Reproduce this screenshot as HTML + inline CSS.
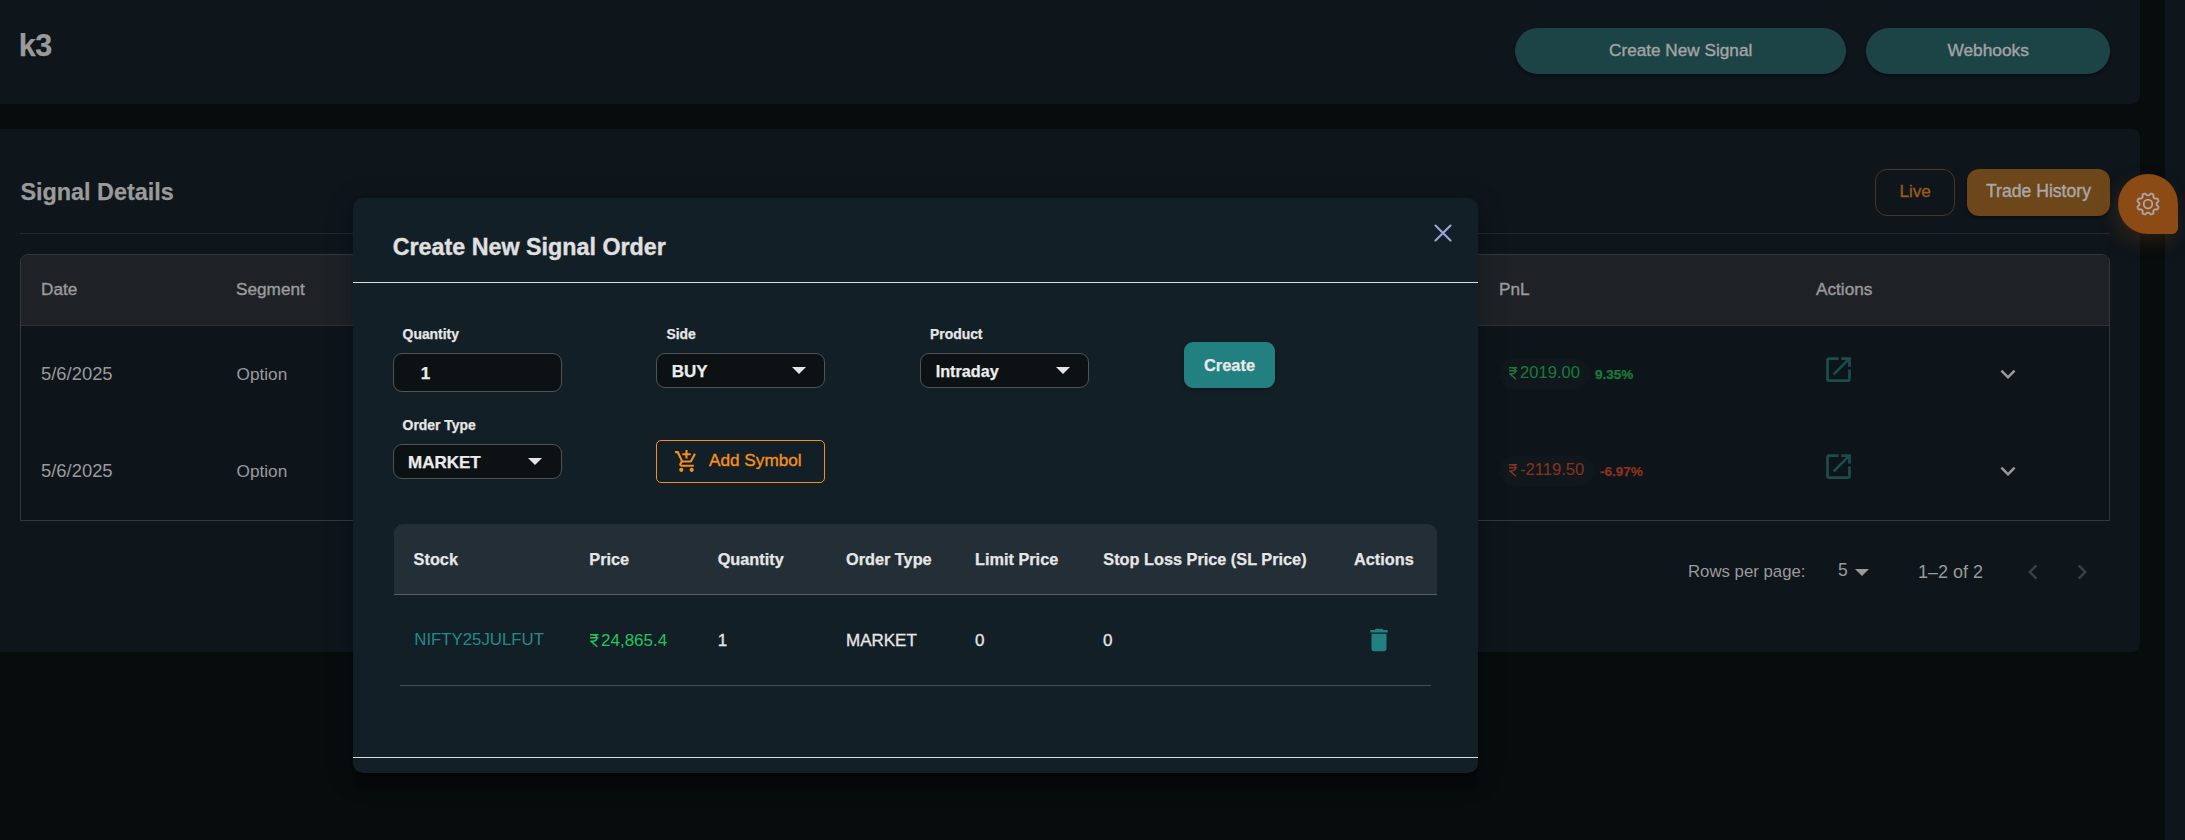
<!DOCTYPE html>
<html><head><meta charset="utf-8"><title>Signal</title>
<style>
html,body{margin:0;padding:0;}
body{width:2185px;height:840px;overflow:hidden;position:relative;background:#070c0d;font-family:"Liberation Sans",sans-serif;}
.t{position:absolute;white-space:nowrap;line-height:1;font-family:"Liberation Sans",sans-serif;}
.r{position:absolute;}
</style></head><body>
<div class="r" style="left:0px;top:0px;width:2140px;height:104px;background:#0e151b;border-radius:0 0 8px 0"></div>
<div class="r" style="left:0px;top:129px;width:2140px;height:523px;background:#0e151b;border-radius:0 8px 8px 0"></div>
<div class="r" style="left:2165px;top:0px;width:20px;height:840px;background:#0e151b"></div>
<div class="t" style="left:18.8px;top:29.78px;font-size:30.5px;font-weight:700;color:#9a9a9a;letter-spacing:-0.5px;-webkit-text-stroke:0.25px #9a9a9a;">k3</div>
<div class="r" style="left:1515px;top:28px;width:331px;height:46px;background:#1c4447;border-radius:23px;box-shadow:0 2px 3px rgba(0,0,0,0.35)"></div>
<div class="t" style="left:1609px;top:42.14px;font-size:17.2px;font-weight:400;color:#a3a3a3;-webkit-text-stroke:0.4px #a3a3a3">Create New Signal</div>
<div class="r" style="left:1866px;top:28px;width:244px;height:46px;background:#1c4447;border-radius:23px;box-shadow:0 2px 3px rgba(0,0,0,0.35)"></div>
<div class="t" style="left:1947.5px;top:42.06px;font-size:17.3px;font-weight:400;color:#a3a3a3;-webkit-text-stroke:0.4px #a3a3a3">Webhooks</div>
<div class="t" style="left:20.4px;top:180.89px;font-size:23.4px;font-weight:700;color:#9a9a9a;-webkit-text-stroke:0.25px #9a9a9a;">Signal Details</div>
<div class="r" style="left:20px;top:233px;width:2090px;height:1px;background:#23282b"></div>
<div class="r" style="left:1875px;top:169px;width:80px;height:47px;border:1px solid #4d361d;border-radius:12px;box-sizing:border-box"></div>
<div class="t" style="left:1899.4px;top:183.44px;font-size:17.2px;font-weight:400;color:#9a5a18;-webkit-text-stroke:0.4px #9a5a18">Live</div>
<div class="r" style="left:1967px;top:169px;width:143px;height:47px;background:#6d4619;border-radius:12px;box-shadow:0 2px 3px rgba(0,0,0,0.35)"></div>
<div class="t" style="left:1986px;top:183.10px;font-size:17.6px;font-weight:400;color:#a8a8a8;-webkit-text-stroke:0.4px #a8a8a8">Trade History</div>
<div class="r" style="left:2118px;top:174px;width:60px;height:60px;background:#8c4a14;border-radius:30px 30px 6px 30px;box-shadow:-4px 8px 18px rgba(140,74,20,0.25)"></div>
<svg class="r" style="left:2134px;top:190px;" width="28" height="28" viewBox="0 0 28 28"><path d="M14.00 5.40 L14.23 5.40 L14.45 5.40 L14.68 5.39 L14.91 5.35 L15.15 5.26 L15.42 5.04 L15.74 4.64 L16.10 4.14 L16.46 3.76 L16.79 3.58 L17.10 3.54 L17.39 3.57 L17.67 3.64 L17.94 3.73 L18.21 3.84 L18.47 3.95 L18.73 4.08 L18.98 4.23 L19.20 4.41 L19.39 4.66 L19.50 5.02 L19.49 5.55 L19.39 6.15 L19.33 6.66 L19.37 7.01 L19.47 7.24 L19.61 7.43 L19.76 7.60 L19.92 7.76 L20.08 7.92 L20.24 8.08 L20.40 8.24 L20.57 8.39 L20.76 8.53 L20.99 8.63 L21.34 8.67 L21.85 8.61 L22.45 8.51 L22.98 8.50 L23.34 8.61 L23.59 8.80 L23.77 9.02 L23.92 9.27 L24.05 9.53 L24.16 9.79 L24.27 10.06 L24.36 10.33 L24.43 10.61 L24.46 10.90 L24.42 11.21 L24.24 11.54 L23.86 11.90 L23.36 12.26 L22.96 12.58 L22.74 12.85 L22.65 13.09 L22.61 13.32 L22.60 13.55 L22.60 13.77 L22.60 14.00 L22.60 14.23 L22.60 14.45 L22.61 14.68 L22.65 14.91 L22.74 15.15 L22.96 15.42 L23.36 15.74 L23.86 16.10 L24.24 16.46 L24.42 16.79 L24.46 17.10 L24.43 17.39 L24.36 17.67 L24.27 17.94 L24.16 18.21 L24.05 18.47 L23.92 18.73 L23.77 18.98 L23.59 19.20 L23.34 19.39 L22.98 19.50 L22.45 19.49 L21.85 19.39 L21.34 19.33 L20.99 19.37 L20.76 19.47 L20.57 19.61 L20.40 19.76 L20.24 19.92 L20.08 20.08 L19.92 20.24 L19.76 20.40 L19.61 20.57 L19.47 20.76 L19.37 20.99 L19.33 21.34 L19.39 21.85 L19.49 22.45 L19.50 22.98 L19.39 23.34 L19.20 23.59 L18.98 23.77 L18.73 23.92 L18.47 24.05 L18.21 24.16 L17.94 24.27 L17.67 24.36 L17.39 24.43 L17.10 24.46 L16.79 24.42 L16.46 24.24 L16.10 23.86 L15.74 23.36 L15.42 22.96 L15.15 22.74 L14.91 22.65 L14.68 22.61 L14.45 22.60 L14.23 22.60 L14.00 22.60 L13.77 22.60 L13.55 22.60 L13.32 22.61 L13.09 22.65 L12.85 22.74 L12.58 22.96 L12.26 23.36 L11.90 23.86 L11.54 24.24 L11.21 24.42 L10.90 24.46 L10.61 24.43 L10.33 24.36 L10.06 24.27 L9.79 24.16 L9.53 24.05 L9.27 23.92 L9.02 23.77 L8.80 23.59 L8.61 23.34 L8.50 22.98 L8.51 22.45 L8.61 21.85 L8.67 21.34 L8.63 20.99 L8.53 20.76 L8.39 20.57 L8.24 20.40 L8.08 20.24 L7.92 20.08 L7.76 19.92 L7.60 19.76 L7.43 19.61 L7.24 19.47 L7.01 19.37 L6.66 19.33 L6.15 19.39 L5.55 19.49 L5.02 19.50 L4.66 19.39 L4.41 19.20 L4.23 18.98 L4.08 18.73 L3.95 18.47 L3.84 18.21 L3.73 17.94 L3.64 17.67 L3.57 17.39 L3.54 17.10 L3.58 16.79 L3.76 16.46 L4.14 16.10 L4.64 15.74 L5.04 15.42 L5.26 15.15 L5.35 14.91 L5.39 14.68 L5.40 14.45 L5.40 14.23 L5.40 14.00 L5.40 13.77 L5.40 13.55 L5.39 13.32 L5.35 13.09 L5.26 12.85 L5.04 12.58 L4.64 12.26 L4.14 11.90 L3.76 11.54 L3.58 11.21 L3.54 10.90 L3.57 10.61 L3.64 10.33 L3.73 10.06 L3.84 9.79 L3.95 9.53 L4.08 9.27 L4.23 9.02 L4.41 8.80 L4.66 8.61 L5.02 8.50 L5.55 8.51 L6.15 8.61 L6.66 8.67 L7.01 8.63 L7.24 8.53 L7.43 8.39 L7.60 8.24 L7.76 8.08 L7.92 7.92 L8.08 7.76 L8.24 7.60 L8.39 7.43 L8.53 7.24 L8.63 7.01 L8.67 6.66 L8.61 6.15 L8.51 5.55 L8.50 5.02 L8.61 4.66 L8.80 4.41 L9.02 4.23 L9.27 4.08 L9.53 3.95 L9.79 3.84 L10.06 3.73 L10.33 3.64 L10.61 3.57 L10.90 3.54 L11.21 3.58 L11.54 3.76 L11.90 4.14 L12.26 4.64 L12.58 5.04 L12.85 5.26 L13.09 5.35 L13.32 5.39 L13.55 5.40 L13.77 5.40Z" fill="none" stroke="#a9a9a9" stroke-width="1.8" stroke-linejoin="round"/><circle cx="14" cy="14" r="4.3" fill="none" stroke="#a9a9a9" stroke-width="1.8"/></svg>
<div class="r" style="left:20px;top:254px;width:2090px;height:267px;border:1px solid #35383a;border-radius:8px 8px 0 0;box-sizing:border-box;background:#0e151a"></div>
<div class="r" style="left:21px;top:255px;width:2088px;height:70px;background:#1e2226;border-radius:7px 7px 0 0"></div>
<div class="r" style="left:21px;top:325px;width:2088px;height:1px;background:#2e3235"></div>
<div class="t" style="left:41px;top:281.44px;font-size:17.2px;font-weight:400;color:#9a9a9a;-webkit-text-stroke:0.4px #9a9a9a">Date</div>
<div class="t" style="left:236px;top:281.44px;font-size:17.2px;font-weight:400;color:#9a9a9a;-webkit-text-stroke:0.4px #9a9a9a">Segment</div>
<div class="t" style="left:1499px;top:281.44px;font-size:17.2px;font-weight:400;color:#9a9a9a;-webkit-text-stroke:0.4px #9a9a9a">PnL</div>
<div class="t" style="left:1816px;top:281.44px;font-size:17.2px;font-weight:400;color:#9a9a9a;-webkit-text-stroke:0.4px #9a9a9a">Actions</div>
<div class="t" style="left:41px;top:364.72px;font-size:18.4px;font-weight:400;color:#9a9a9a;">5/6/2025</div>
<div class="t" style="left:236.6px;top:365.74px;font-size:17.2px;font-weight:400;color:#9a9a9a;">Option</div>
<div class="t" style="left:41px;top:461.72px;font-size:18.4px;font-weight:400;color:#9a9a9a;">5/6/2025</div>
<div class="t" style="left:236.6px;top:462.74px;font-size:17.2px;font-weight:400;color:#9a9a9a;">Option</div>
<div class="r" style="left:1499px;top:359px;width:91px;height:30px;background:#10181d;border-radius:15px"></div>
<svg class="r" style="left:1509px;top:366.7px;overflow:visible" width="8.12" height="12.30" viewBox="0 0 8.12 12.30"><path d="M0 0.71 H8.12 M0 3.69 H8.12 M2.27 0.71 C7.96 0.71 7.96 6.89 2.27 6.89 H0.16 M0.97 6.89 L6.98 12.30" fill="none" stroke="#1b7a3a" stroke-width="1.41"/></svg>
<div class="t" style="left:1520px;top:365.25px;font-size:16.6px;font-weight:400;color:#1b7a3a;">2019.00</div>
<div class="t" style="left:1595px;top:367.87px;font-size:13.5px;font-weight:700;color:#1b7a3a;-webkit-text-stroke:0.25px #1b7a3a;">9.35%</div>
<div class="r" style="left:1499px;top:456px;width:96px;height:30px;background:#10181d;border-radius:15px"></div>
<svg class="r" style="left:1509px;top:463.7px;overflow:visible" width="8.12" height="12.30" viewBox="0 0 8.12 12.30"><path d="M0 0.71 H8.12 M0 3.69 H8.12 M2.27 0.71 C7.96 0.71 7.96 6.89 2.27 6.89 H0.16 M0.97 6.89 L6.98 12.30" fill="none" stroke="#8a321c" stroke-width="1.41"/></svg>
<div class="t" style="left:1520px;top:462.25px;font-size:16.6px;font-weight:400;color:#8a321c;">-2119.50</div>
<div class="t" style="left:1600px;top:464.87px;font-size:13.5px;font-weight:700;color:#8a321c;-webkit-text-stroke:0.25px #8a321c;">-6.97%</div>
<svg class="r" style="left:1822px;top:352.5px;" width="33" height="33" viewBox="0 0 24 24"><path fill="#1c4d4d" d="M19 19H5V5h7V3H5c-1.11 0-2 .9-2 2v14c0 1.1.89 2 2 2h14c1.1 0 2-.9 2-2v-7h-2v7zM14 3v2h3.59l-9.83 9.83 1.41 1.41L19 6.41V10h2V3h-7z"/></svg>
<svg class="r" style="left:1993px;top:359px;" width="30" height="30" viewBox="0 0 24 24"><path fill="#9a9a9a" d="M16.59 8.59 12 13.17 7.41 8.59 6 10l6 6 6-6z"/></svg>
<svg class="r" style="left:1822px;top:449.5px;" width="33" height="33" viewBox="0 0 24 24"><path fill="#1c4d4d" d="M19 19H5V5h7V3H5c-1.11 0-2 .9-2 2v14c0 1.1.89 2 2 2h14c1.1 0 2-.9 2-2v-7h-2v7zM14 3v2h3.59l-9.83 9.83 1.41 1.41L19 6.41V10h2V3h-7z"/></svg>
<svg class="r" style="left:1993px;top:456px;" width="30" height="30" viewBox="0 0 24 24"><path fill="#9a9a9a" d="M16.59 8.59 12 13.17 7.41 8.59 6 10l6 6 6-6z"/></svg>
<div class="t" style="left:1688px;top:563.78px;font-size:16.8px;font-weight:400;color:#9a9a9a;">Rows per page:</div>
<div class="t" style="left:1838px;top:562.19px;font-size:17.5px;font-weight:400;color:#9a9a9a;">5</div>
<svg class="r" style="left:1855px;top:569px;" width="14" height="7" viewBox="0 0 14 7"><path fill="#9a9a9a" d="M0 0H14L7 7z"/></svg>
<div class="t" style="left:1918px;top:562.76px;font-size:18px;font-weight:400;color:#9a9a9a;">1–2 of 2</div>
<svg class="r" style="left:2018px;top:556.5px;" width="30" height="30" viewBox="0 0 24 24"><path fill="#3a3f42" d="M15.41 7.41 14 6l-6 6 6 6 1.41-1.41L10.83 12z"/></svg>
<svg class="r" style="left:2067.3px;top:556.5px;" width="30" height="30" viewBox="0 0 24 24"><path fill="#3a3f42" d="M10 6 8.59 7.41 13.17 12l-4.58 4.59L10 18l6-6z"/></svg>
<div class="r" style="left:353px;top:198px;width:1125px;height:575px;background:#131f27;border-radius:10px;box-shadow:0 19px 5px -3px rgba(0,0,0,0.32),0 6px 26px 2px rgba(0,0,0,0.22)"></div>
<div class="t" style="left:392.7px;top:236.28px;font-size:23.3px;font-weight:700;color:#e0e0e0;-webkit-text-stroke:0.35px #e0e0e0">Create New Signal Order</div>
<svg class="r" style="left:1434px;top:224px;" width="18" height="18" viewBox="0 0 18 18"><path d="M1.5 1.5L16.5 16.5M16.5 1.5L1.5 16.5" stroke="#9ea7d8" stroke-width="2.1" stroke-linecap="round"/></svg>
<div class="r" style="left:353px;top:281.5px;width:1125px;height:1.5px;background:#dcdcdc"></div>
<div class="t" style="left:402.6px;top:328.23px;font-size:13.9px;font-weight:700;color:#e6e6e6;-webkit-text-stroke:0.25px #e6e6e6;">Quantity</div>
<div class="t" style="left:666.4px;top:328.23px;font-size:13.9px;font-weight:700;color:#e6e6e6;-webkit-text-stroke:0.25px #e6e6e6;">Side</div>
<div class="t" style="left:930px;top:328.23px;font-size:13.9px;font-weight:700;color:#e6e6e6;-webkit-text-stroke:0.25px #e6e6e6;">Product</div>
<div class="t" style="left:402.6px;top:419.23px;font-size:13.9px;font-weight:700;color:#e6e6e6;-webkit-text-stroke:0.25px #e6e6e6;">Order Type</div>
<div class="r" style="left:393px;top:353px;width:169px;height:39px;background:#0c1213;border:1px solid #505356;border-radius:9px;box-sizing:border-box"></div>
<div class="t" style="left:420.7px;top:364.61px;font-size:17px;font-weight:700;color:#ececec;-webkit-text-stroke:0.25px #ececec;">1</div>
<div class="r" style="left:656px;top:353px;width:169px;height:35px;background:#0c1213;border:1px solid #505356;border-radius:9px;box-sizing:border-box"></div>
<div class="t" style="left:671.7px;top:362.61px;font-size:17px;font-weight:700;color:#ececec;-webkit-text-stroke:0.25px #ececec;">BUY</div>
<svg class="r" style="left:792px;top:367px;" width="14" height="7" viewBox="0 0 14 7"><path fill="#e6e6e6" d="M0 0H14L7 7z"/></svg>
<div class="r" style="left:920px;top:353px;width:169px;height:35px;background:#0c1213;border:1px solid #505356;border-radius:9px;box-sizing:border-box"></div>
<div class="t" style="left:935.7px;top:363.29px;font-size:16.2px;font-weight:700;color:#ececec;-webkit-text-stroke:0.25px #ececec;">Intraday</div>
<svg class="r" style="left:1056px;top:367px;" width="14" height="7" viewBox="0 0 14 7"><path fill="#e6e6e6" d="M0 0H14L7 7z"/></svg>
<div class="r" style="left:1184px;top:342px;width:91px;height:46px;background:#238080;border-radius:9px;box-shadow:0 2px 4px rgba(0,0,0,0.3)"></div>
<div class="t" style="left:1204px;top:357.12px;font-size:16.4px;font-weight:700;color:#e8e8e8;-webkit-text-stroke:0.25px #e8e8e8;">Create</div>
<div class="r" style="left:393px;top:444px;width:169px;height:35px;background:#0c1213;border:1px solid #505356;border-radius:9px;box-sizing:border-box"></div>
<div class="t" style="left:408px;top:453.61px;font-size:17px;font-weight:700;color:#ececec;-webkit-text-stroke:0.25px #ececec;">MARKET</div>
<svg class="r" style="left:528px;top:458px;" width="14" height="7" viewBox="0 0 14 7"><path fill="#e6e6e6" d="M0 0H14L7 7z"/></svg>
<div class="r" style="left:656px;top:440px;width:169px;height:43px;border:1px solid #f5901e;border-radius:5px;box-sizing:border-box"></div>
<svg class="r" style="left:673.7px;top:449px;" width="25" height="25" viewBox="0 0 24 24"><path fill="#f5901e" d="M11 9h2V6h3V4h-3V1h-2v3H8v2h3v3zm-4 9c-1.1 0-1.99.9-1.99 2S5.9 22 7 22s2-.9 2-2-.9-2-2-2zm10 0c-1.1 0-1.99.9-1.99 2s.89 2 1.99 2 2-.9 2-2-.9-2-2-2zm-8.9-5h7.45c.75 0 1.41-.41 1.75-1.03L21 4.96 19.25 4l-3.7 7H8.53L4.27 2H1v2h2l3.6 7.59-1.35 2.44C4.52 15.37 5.48 17 7 17h12v-2H7l1.1-2z"/></svg>
<div class="t" style="left:709px;top:452.44px;font-size:17.2px;font-weight:400;color:#f5901e;-webkit-text-stroke:0.35px #f5901e">Add Symbol</div>
<div class="r" style="left:394px;top:524px;width:1043px;height:70px;background:#232e36;border-radius:9px 9px 0 0"></div>
<div class="r" style="left:394px;top:594px;width:1043px;height:1px;background:#5a5d5f"></div>
<div class="t" style="left:413.6px;top:551.40px;font-size:16.3px;font-weight:700;color:#e6e6e6;-webkit-text-stroke:0.25px #e6e6e6;">Stock</div>
<div class="t" style="left:589.3px;top:551.40px;font-size:16.3px;font-weight:700;color:#e6e6e6;-webkit-text-stroke:0.25px #e6e6e6;">Price</div>
<div class="t" style="left:717.7px;top:551.40px;font-size:16.3px;font-weight:700;color:#e6e6e6;-webkit-text-stroke:0.25px #e6e6e6;">Quantity</div>
<div class="t" style="left:846px;top:551.40px;font-size:16.3px;font-weight:700;color:#e6e6e6;-webkit-text-stroke:0.25px #e6e6e6;">Order Type</div>
<div class="t" style="left:975px;top:551.40px;font-size:16.3px;font-weight:700;color:#e6e6e6;-webkit-text-stroke:0.25px #e6e6e6;">Limit Price</div>
<div class="t" style="left:1103.3px;top:551.40px;font-size:16.3px;font-weight:700;color:#e6e6e6;-webkit-text-stroke:0.25px #e6e6e6;">Stop Loss Price (SL Price)</div>
<div class="t" style="left:1354px;top:551.40px;font-size:16.3px;font-weight:700;color:#e6e6e6;-webkit-text-stroke:0.25px #e6e6e6;">Actions</div>
<div class="t" style="left:414.3px;top:632.18px;font-size:16.8px;font-weight:400;color:#238a8a;">NIFTY25JULFUT</div>
<svg class="r" style="left:590px;top:633.6px;overflow:visible" width="8.45" height="12.80" viewBox="0 0 8.45 12.80"><path d="M0 0.74 H8.45 M0 3.84 H8.45 M2.37 0.74 C8.28 0.74 8.28 7.17 2.37 7.17 H0.17 M1.01 7.17 L7.27 12.80" fill="none" stroke="#22c55e" stroke-width="1.47"/></svg>
<div class="t" style="left:601px;top:632.21px;font-size:17px;font-weight:400;color:#22c55e;">24,865.4</div>
<div class="t" style="left:717.7px;top:632.01px;font-size:17px;font-weight:400;color:#e6e6e6;-webkit-text-stroke:0.3px #e6e6e6;">1</div>
<div class="t" style="left:846px;top:632.01px;font-size:17px;font-weight:400;color:#e6e6e6;-webkit-text-stroke:0.3px #e6e6e6;">MARKET</div>
<div class="t" style="left:975px;top:632.01px;font-size:17px;font-weight:400;color:#e6e6e6;-webkit-text-stroke:0.3px #e6e6e6;">0</div>
<div class="t" style="left:1103px;top:632.01px;font-size:17px;font-weight:400;color:#e6e6e6;-webkit-text-stroke:0.3px #e6e6e6;">0</div>
<svg class="r" style="left:1364px;top:625px;" width="30" height="30" viewBox="0 0 24 24"><path fill="#238080" d="M6 19c0 1.1.9 2 2 2h8c1.1 0 2-.9 2-2V7H6v12zM19 4h-3.5l-1-1h-5l-1 1H5v2h14V4z"/></svg>
<div class="r" style="left:400px;top:685px;width:1031px;height:1px;background:#4a4d4f"></div>
<div class="r" style="left:353px;top:756.5px;width:1125px;height:1.5px;background:#dcdcdc"></div>
</body></html>
